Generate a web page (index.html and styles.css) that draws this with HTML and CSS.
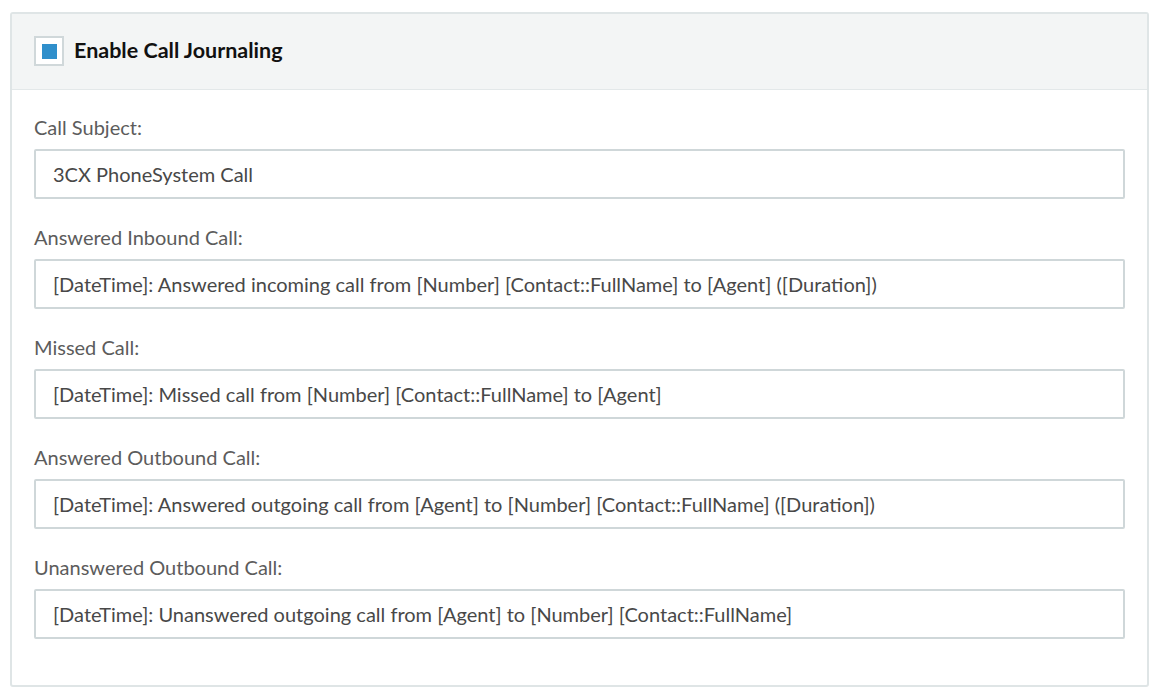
FILE: index.html
```html
<!DOCTYPE html>
<html>
  <head>
    <title>Call Journaling</title>
    <link rel="stylesheet" href="styles.css">
  </head>
  <body>
    <div class="panel">
      <div class="panel-heading">
        <label class="check">
          <span class="check-box"><span class="check-mark"></span></span>
          <span class="check-title">Enable Call Journaling</span>
        </label>
      </div>

      <div class="panel-body">
        <div class="field">
          <label for="subject">Call Subject:</label>
          <input type="text" id="subject" value="3CX PhoneSystem Call" />
        </div>

        <div class="field">
          <label for="inbound">Answered Inbound Call:</label>
          <input type="text" id="inbound" value="[DateTime]: Answered incoming call from [Number] [Contact::FullName] to [Agent] ([Duration])" />
        </div>

        <div class="field">
          <label for="missed">Missed Call:</label>
          <input type="text" id="missed" value="[DateTime]: Missed call from [Number] [Contact::FullName] to [Agent]" />
        </div>

        <div class="field">
          <label for="outbound">Answered Outbound Call:</label>
          <input type="text" id="outbound" value="[DateTime]: Answered outgoing call from [Agent] to [Number] [Contact::FullName] ([Duration])" />
        </div>

        <div class="field">
          <label for="unanswered">Unanswered Outbound Call:</label>
          <input type="text" id="unanswered" value="[DateTime]: Unanswered outgoing call from [Agent] to [Number] [Contact::FullName]" />
        </div>
      </div>
    </div>
  </body>
</html>
```

FILE: styles.css
```css
body {
  font-family: Lato, "Open Sans", sans-serif;
  margin: 12px 12px 0 10px;
  background-color: #ffffff;
  color: #555555;
}

.panel {
  border: 2px solid #dfe5e6;
  border-radius: 3px;
}

.panel-heading {
  background-color: #f3f5f5;
  border-bottom: 1px solid #e3e8e9;
  padding: 22px 22px 23px;
}

.check {
  display: flex;
  align-items: center;
  gap: 10px;
}

.check-box {
  width: 26px;
  height: 26px;
  border: 2px solid #d0d8da;
  background-color: #ffffff;
  display: flex;
  align-items: center;
  justify-content: center;
}

.check-mark {
  width: 15px;
  height: 15px;
  background-color: #2f8fcb;
}

.check-title {
  font-size: 21.5px;
  font-weight: bold;
  color: #111111;
  margin-top: -3px;
}

.panel-body {
  padding: 25px 22px 20px;
}

.field {
  margin-bottom: 26px;
}

.field label {
  display: block;
  font-size: 20px;
  line-height: 24px;
  margin-bottom: 10px;
  color: #5c5c5c;
}

.field input[type="text"] {
  display: block;
  box-sizing: border-box;
  width: 100%;
  height: 50px;
  padding: 0 17px;
  border: 2px solid #cfd7d9;
  border-radius: 2px;
  font-family: inherit;
  font-size: 20px;
  color: #484848;
}
```
